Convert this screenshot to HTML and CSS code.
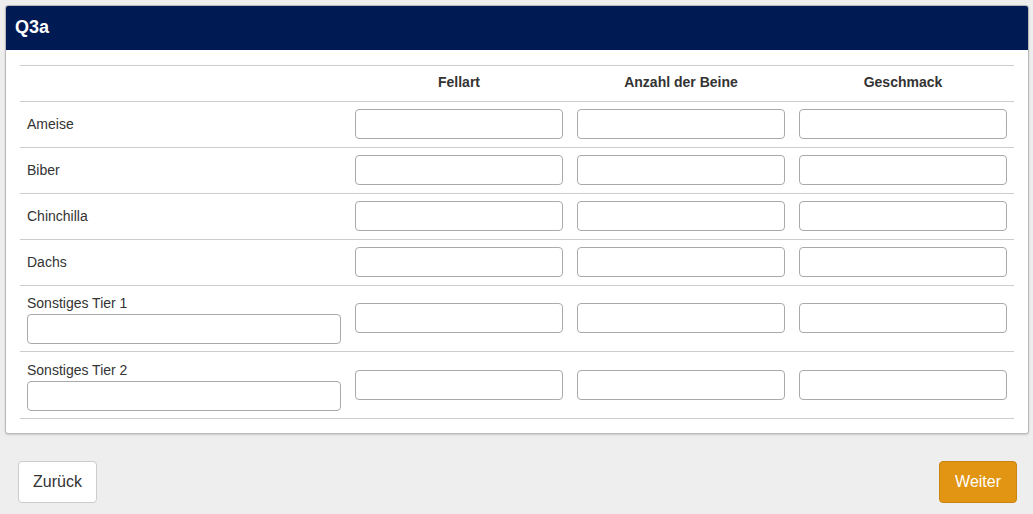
FILE: index.html
```html
<!DOCTYPE html>
<html>
<head>
<meta charset="utf-8">
<link rel="stylesheet" href="styles.css">
</head>
<body>
<div class="card">
  <div class="card-head">Q3a</div>
  <div class="card-body">
    <table class="grid">
      <thead>
        <tr><th class="lbl"></th><th>Fellart</th><th>Anzahl der Beine</th><th>Geschmack</th></tr>
      </thead>
      <tbody>
        <tr><td class="lbl">Ameise</td><td><input class="inp"></td><td><input class="inp"></td><td><input class="inp"></td></tr>
        <tr><td class="lbl">Biber</td><td><input class="inp"></td><td><input class="inp"></td><td><input class="inp"></td></tr>
        <tr><td class="lbl">Chinchilla</td><td><input class="inp"></td><td><input class="inp"></td><td><input class="inp"></td></tr>
        <tr><td class="lbl">Dachs</td><td><input class="inp"></td><td><input class="inp"></td><td><input class="inp"></td></tr>
        <tr class="other"><td class="lbl"><div class="other-lbl">Sonstiges Tier 1</div><input class="inp"></td><td><input class="inp"></td><td><input class="inp"></td><td><input class="inp"></td></tr>
        <tr class="other last"><td class="lbl"><div class="other-lbl">Sonstiges Tier 2</div><input class="inp"></td><td><input class="inp"></td><td><input class="inp"></td><td><input class="inp"></td></tr>
      </tbody>
    </table>
  </div>
</div>
<div class="nav">
  <button class="btn btn-back">Zurück</button>
  <button class="btn btn-next">Weiter</button>
</div>
</body>
</html>
```
FILE: styles.css
```css
html, body {
  margin: 0;
  padding: 0;
  background: #eeeeee;
  font-family: "Liberation Sans", Arial, sans-serif;
  color: #333;
}
body {
  padding: 5px 4px 0 5px;
}
.card {
  background: #fff;
  border: 1px solid #b9b9b9;
  border-radius: 3px;
  box-shadow: 0 1px 2px rgba(0,0,0,0.15);
  overflow: hidden;
}
.card-head {
  background: #001a54;
  color: #fff;
  font-weight: bold;
  font-size: 18px;
  height: 44px;
  line-height: 43px;
  padding: 0 9px;
}
.card-body {
  padding: 15px 14px 14px 14px;
}
.grid {
  width: 100%;
  border-collapse: collapse;
  table-layout: fixed;
  font-size: 14px;
}
.grid th, .grid td {
  border-top: 1px solid #cccccc;
  border-bottom: 1px solid #cccccc;
  padding: 7px 7px 8px;
  vertical-align: middle;
}
.grid th {
  font-weight: bold;
  height: 20px;
  padding: 6px 7px 9px;
  text-align: center;
  font-size: 14px;
  color: #333;
}
.grid th.lbl {
  width: 314px;
}
.grid td {
  height: 30px;
}
.grid td.lbl {
  text-align: left;
}
.inp {
  display: block;
  box-sizing: border-box;
  width: 100%;
  height: 30px;
  border: 1px solid #aaaaaa;
  border-radius: 4px;
  margin: 0;
  padding: 4px 6px;
  background: #fff;
  font: inherit;
}
.other td {
  height: 50px;
}
.other.last td {
  height: 51px;
}
.other td.lbl {
  vertical-align: top;
  padding-top: 6px;
  padding-bottom: 6px;
  height: auto;
}
.other.last td.lbl {
  padding-top: 7px;
}
.other-lbl {
  margin: 3px 0 3px;
  line-height: 16px;
}
.nav {
  display: flex;
  justify-content: space-between;
  padding: 27px 12px 0 13px;
}
.btn {
  height: 42px;
  border-radius: 4px;
  font-family: "Liberation Sans", Arial, sans-serif;
  font-size: 16px;
  padding: 0 14px;
  cursor: pointer;
}
.btn-back {
  background: #fff;
  border: 1px solid #cccccc;
  color: #333;
}
.btn-next {
  background: #e29512;
  border: 1px solid #c98410;
  color: #fff;
  padding: 0 15px;
}
```
